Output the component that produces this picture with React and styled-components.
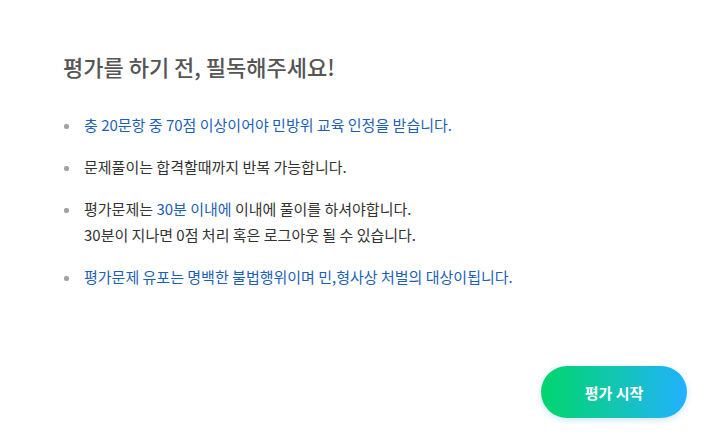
import React from 'react'
import styled, { createGlobalStyle } from 'styled-components'

const GlobalStyle = createGlobalStyle`
  html, body {
    margin: 0;
    padding: 0;
    background: #fff;
  }
  body {
    font-family: "Noto Sans CJK KR", "Noto Sans", sans-serif;
  }
`

const Page = styled.div`
  width: 727px;
  height: 440px;
  box-sizing: border-box;
  padding: 51px 40px 0 63px;
  display: flex;
  flex-direction: column;
`

const Title = styled.h2`
  margin: 0;
  font-size: 22px;
  line-height: 30px;
  font-weight: 500;
  color: #555;
`

const Notice = styled.ul`
  list-style: none;
  margin: 31px 0 0;
  padding: 0;
  display: flex;
  flex-direction: column;
  gap: 16px;
`

const Item = styled.li`
  position: relative;
  padding-left: 21px;
  font-size: 15px;
  line-height: 26px;
  color: ${p => (p.$blue ? '#1d5fb8' : '#333')};

  &::before {
    content: '';
    position: absolute;
    left: 1px;
    top: 12px;
    width: 5px;
    height: 5px;
    border-radius: 2px;
    background: #a2a2a2;
  }
`

const Blue = styled.span`
  color: #1d5fb8;
`

const Footer = styled.div`
  margin-top: auto;
  margin-bottom: 22px;
  display: flex;
  justify-content: flex-end;
`

const StartButton = styled.button`
  width: 146px;
  height: 52px;
  border: 0;
  border-radius: 26px;
  background: linear-gradient(90deg, #00d56c 0%, #12c6b0 50%, #22b1ff 100%);
  box-shadow: 0 2px 6px rgba(60, 150, 230, 0.25);
  color: #fff;
  font-family: inherit;
  font-size: 15px;
  font-weight: 700;
  cursor: pointer;
`

export default function App() {
  return (
    <Page>
      <GlobalStyle />
      <Title>평가를 하기 전, 필독해주세요!</Title>
      <Notice>
        <Item $blue>충 20문항 중 70점 이상이어야 민방위 교육 인정을 받습니다.</Item>
        <Item>문제풀이는 합격할때까지 반복 가능합니다.</Item>
        <Item>
          평가문제는 <Blue>30분 이내에</Blue> 이내에 풀이를 하셔야합니다.
          <br />
          30분이 지나면 0점 처리 혹은 로그아웃 될 수 있습니다.
        </Item>
        <Item $blue>평가문제 유포는 명백한 불법행위이며 민,형사상 처벌의 대상이됩니다.</Item>
      </Notice>
      <Footer>
        <StartButton>평가 시작</StartButton>
      </Footer>
    </Page>
  )
}
